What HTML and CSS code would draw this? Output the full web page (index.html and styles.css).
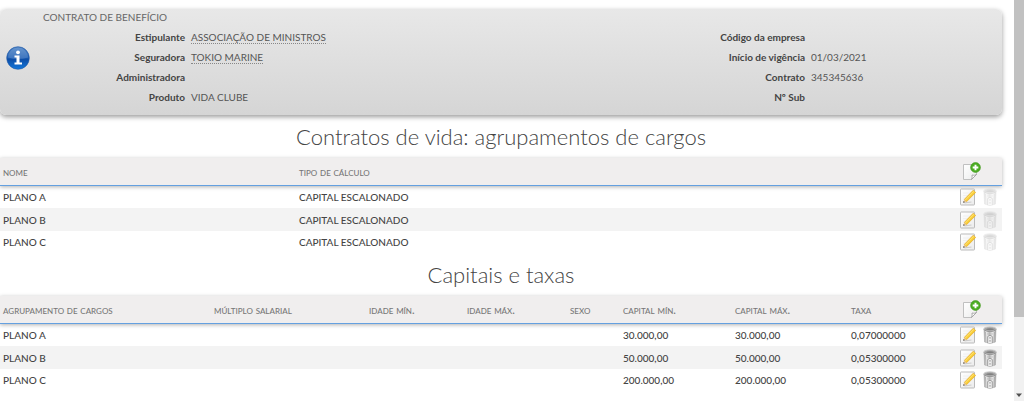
FILE: index.html
```
<!DOCTYPE html>
<html lang="pt-BR">
<head>
  <meta charset="UTF-8" />
  <meta name="viewport" content="width=device-width, initial-scale=1" />
  <title>Contrato de benefício</title>
  <link rel="stylesheet" href="styles.css">
</head>
<body>

  <svg class="defs" aria-hidden="true">
    <defs>
      <linearGradient id="azul" x1="0" y1="0" x2="0" y2="1">
        <stop offset="0" stop-color="#4d83c6" />
        <stop offset=".5" stop-color="#1f5fb4" />
        <stop offset=".55" stop-color="#0d4da6" />
        <stop offset="1" stop-color="#1278dc" />
      </linearGradient>
      <linearGradient id="papel" x1="0" y1="0" x2="1" y2="1">
        <stop offset="0" stop-color="#fff" />
        <stop offset="1" stop-color="#ececec" />
      </linearGradient>
      <linearGradient id="metal" x1="0" y1="0" x2="1" y2="0">
        <stop offset="0" stop-color="#999" />
        <stop offset=".2" stop-color="#f4f4f4" />
        <stop offset=".45" stop-color="#bbb" />
        <stop offset=".75" stop-color="#f2f2f2" />
        <stop offset="1" stop-color="#909090" />
      </linearGradient>
    </defs>
    <symbol id="novo" viewBox="0 0 20 20">
      <path d="M2.500 2.500h13v10l-5 5h-8z" fill="url(#papel)" stroke="#c0c0c0" />
      <path d="M10.500 17.500q1-2.500.5-4.500 2 .8 4.500-.5z" fill="#fff" stroke="#999" stroke-width=".8" />
      <circle cx="14.500" cy="5.500" r="4.900" fill="#4cad22" stroke="#3c9518" stroke-width=".6" />
      <path d="M14.500 2.700v5.600M11.700 5.500h5.600" stroke="#fff" stroke-width="1.900" />
    </symbol>
    <symbol id="editar" viewBox="0 0 16 18">
      <rect x=".5" y="1" width="14" height="16" rx=".6" fill="url(#papel)" stroke="#bbb" />
      <path d="M3 5h7M3 7.500h5M3 10h3" stroke="#f0f0f0" />
      <path d="M4.500 14.800l7-.8" stroke="#ccc" stroke-width="1.200" />
      <path d="M4.200 11.500L13.200 2.200l2.500 2.200L6.600 13.700z" fill="#f9cd35" stroke="#dfa528" stroke-width=".6" />
      <path d="M5.300 12L14 3.200" stroke="#ffe98a" stroke-width=".8" />
      <path d="M3.300 14.500l.9-3 2.400 2.200z" fill="#e8c795" />
      <path d="M3.200 14.700l.5-1.700 1.200 1.200z" fill="#333" />
    </symbol>
    <symbol id="excluir" viewBox="0 0 14 18">
      <path d="M1 3l.6 13q5.400 3 10.800 0L13 3z" fill="url(#metal)" stroke="#aaa" stroke-width=".6" />
      <path d="M2.700 6l.4 10M11.300 6l-.4 10" stroke="#999" stroke-width=".7" />
      <path d="M4.900 6.800v2M7 7v1.500M9.100 6.800v2" stroke="#aaa" stroke-width=".6" />
      <path d="M4.700 17v-6.500q2.300-2.500 4.600 0V17" fill="#eee" stroke="#8c8c8c" stroke-width=".8" />
      <path d="M6.300 11.300h1.400v1.200H6.300zM6.300 14.300h1.400v1.200H6.300z" fill="#999" />
      <ellipse cx="7" cy="3" rx="6.300" ry="2.300" fill="#a8a8a8" stroke="#d0d0d0" stroke-width=".9" />
      <path d="M2.500 3.300q4.500-2 9 0-4.500 2-9 0z" fill="#808080" />
      <path d="M.8 3.700q6.200 4 12.400 0" fill="none" stroke="#808080" stroke-width=".7" />
    </symbol>
  </svg>

  <main class="content">
    <section class="panel">
      <svg class="info" viewBox="0 0 24 24" aria-hidden="true">
        <circle cx="12" cy="12" r="11.300" fill="url(#azul)" stroke="#1c56a4" stroke-width=".6" />
        <path d="M2 11.500a10 10 0 0 1 20 0q-10 3-20 0z" fill="#fff" opacity=".15" />
        <circle cx="12" cy="6.300" r="1.900" fill="#fff" />
        <path d="M8.500 9.500h5v7H16v2H8.500v-2h2v-5h-2z" fill="#fff" />
      </svg>
      <div class="panel-body">
        <h2>CONTRATO DE BENEFÍCIO</h2>
        <dl class="fields">
          <dt>Estipulante</dt><dd><a href="#">ASSOCIAÇÃO DE MINISTROS</a></dd>
          <dt>Código da empresa</dt><dd></dd>
          <dt>Seguradora</dt><dd><a href="#">TOKIO MARINE</a></dd>
          <dt>Início de vigência</dt><dd>01/03/2021</dd>
          <dt>Administradora</dt><dd></dd>
          <dt>Contrato</dt><dd>345345636</dd>
          <dt>Produto</dt><dd>VIDA CLUBE</dd>
          <dt>Nº Sub</dt><dd></dd>
        </dl>
      </div>
    </section>

    <h1>Contratos de vida: agrupamentos de cargos</h1>
    <table>
      <colgroup>
        <col class="w-nome"><col><col class="w-acoes">
      </colgroup>
      <thead>
        <tr>
          <th>nome</th>
          <th>tipo de cálculo</th>
          <th><button class="icon add" aria-label="Novo agrupamento"><svg><use href="#novo" /></svg></button></th>
        </tr>
      </thead>
      <tbody>
        <tr>
          <td>PLANO A</td><td>CAPITAL ESCALONADO</td>
          <td><div class="actions">
            <button class="icon" aria-label="Editar"><svg><use href="#editar" /></svg></button>
            <button class="icon" aria-label="Excluir" disabled><svg><use href="#excluir" /></svg></button>
          </div></td>
        </tr>
        <tr>
          <td>PLANO B</td><td>CAPITAL ESCALONADO</td>
          <td><div class="actions">
            <button class="icon" aria-label="Editar"><svg><use href="#editar" /></svg></button>
            <button class="icon" aria-label="Excluir" disabled><svg><use href="#excluir" /></svg></button>
          </div></td>
        </tr>
        <tr>
          <td>PLANO C</td><td>CAPITAL ESCALONADO</td>
          <td><div class="actions">
            <button class="icon" aria-label="Editar"><svg><use href="#editar" /></svg></button>
            <button class="icon" aria-label="Excluir" disabled><svg><use href="#excluir" /></svg></button>
          </div></td>
        </tr>
      </tbody>
    </table>

    <h1>Capitais e taxas</h1>
    <table>
      <colgroup>
        <col class="w-agrup"><col class="w-multiplo"><col class="w-idade-min"><col class="w-idade-max"><col class="w-sexo">
        <col class="w-capital-min"><col class="w-capital-max"><col><col class="w-acoes">
      </colgroup>
      <thead>
        <tr>
          <th>agrupamento de cargos</th>
          <th>múltiplo salarial</th>
          <th>idade mín.</th>
          <th>idade máx.</th>
          <th>sexo</th>
          <th>capital mín.</th>
          <th>capital máx.</th>
          <th>taxa</th>
          <th><button class="icon add" aria-label="Nova taxa"><svg><use href="#novo" /></svg></button></th>
        </tr>
      </thead>
      <tbody>
        <tr>
          <td>PLANO A</td><td></td><td></td><td></td><td></td>
          <td>30.000,00</td><td>30.000,00</td><td>0,07000000</td>
          <td><div class="actions">
            <button class="icon" aria-label="Editar"><svg><use href="#editar" /></svg></button>
            <button class="icon" aria-label="Excluir"><svg><use href="#excluir" /></svg></button>
          </div></td>
        </tr>
        <tr>
          <td>PLANO B</td><td></td><td></td><td></td><td></td>
          <td>50.000,00</td><td>50.000,00</td><td>0,05300000</td>
          <td><div class="actions">
            <button class="icon" aria-label="Editar"><svg><use href="#editar" /></svg></button>
            <button class="icon" aria-label="Excluir"><svg><use href="#excluir" /></svg></button>
          </div></td>
        </tr>
        <tr>
          <td>PLANO C</td><td></td><td></td><td></td><td></td>
          <td>200.000,00</td><td>200.000,00</td><td>0,05300000</td>
          <td><div class="actions">
            <button class="icon" aria-label="Editar"><svg><use href="#editar" /></svg></button>
            <button class="icon" aria-label="Excluir"><svg><use href="#excluir" /></svg></button>
          </div></td>
        </tr>
      </tbody>
    </table>
  </main>

  <div class="scrollbar" aria-hidden="true">
    <div class="thumb"></div>
    <svg class="arrow" viewBox="0 0 10 12"><path d="M2 4.500h6L5 8z" fill="#505050" /></svg>
  </div>

</body>
</html>
```
FILE: styles.css
```
body {
  margin: 0;
  display: flex;
  height: 100vh;
  overflow: hidden;
  font-family: Lato, sans-serif;
  font-size: 10px;
  line-height: 20px;
  color: #444;
  background: #fff;
}

.defs {
  position: absolute;
  width: 0;
  height: 0;
}

.content {
  flex: 1;
  min-width: 0;
  padding: 9px 12px 0 0;
}

.panel {
  display: flex;
  align-items: center;
  gap: 13px;
  padding: 0 0 8px 6px;
  border-radius: 6px;
  background: linear-gradient(#e8e8e8, #d5d5d5);
  box-shadow: 0 2px 5px rgba(0, 0, 0, 0.4);
}

.info {
  width: 24px;
  height: 24px;
}

.panel-body {
  flex: 1;
}

.panel h2 {
  margin: 0;
  font-size: 10px;
  line-height: 16px;
  font-weight: 400;
  color: #666;
}

.fields {
  display: grid;
  grid-template-columns: 142px 1fr 142px 191px;
  column-gap: 6px;
  margin: 2px 0 0;
}

.fields dt {
  text-align: right;
  font-weight: 700;
}

.fields dd {
  margin: 0;
  min-height: 20px;
  color: #555;
}

.fields a {
  display: inline-block;
  line-height: 12px;
  color: #555;
  text-decoration: none;
  border-bottom: 1px dotted #888;
}

h1 {
  margin: 0;
  padding: 1px 0 0;
  line-height: 42px;
  font-size: 22px;
  font-weight: 300;
  text-align: center;
}

table {
  width: 100%;
  table-layout: fixed;
  border-collapse: separate;
  border-spacing: 0;
}

th,
td {
  padding: 0 3px;
  text-align: left;
}

th {
  height: 27px;
  background: #f0eeee;
  border-bottom: 1px solid #64a0e0;
  font-size: 11px;
  font-variant: small-caps;
  font-weight: 500;
  color: #777;
}

thead tr {
  box-shadow: 0 1px 4px rgba(0, 0, 0, 0.3);
}

td {
  height: 22px;
  font-weight: 500;
}

tbody tr:nth-child(even) td {
  height: 23px;
  background: #f3f3f3;
}

.w-nome { width: 296px; }
.w-agrup { width: 211px; }
.w-multiplo { width: 155px; }
.w-idade-min { width: 98px; }
.w-idade-max { width: 103px; }
.w-sexo { width: 53px; }
.w-capital-min { width: 112px; }
.w-capital-max { width: 116px; }
.w-acoes { width: 45px; }

.actions {
  display: flex;
  align-items: center;
  gap: 7px;
}

.icon {
  display: block;
  width: 16px;
  height: 18px;
  padding: 0;
  border: none;
  background: none;
  cursor: pointer;
}

.icon + .icon {
  width: 14px;
}

.icon svg {
  display: block;
  width: 100%;
  height: 100%;
}

.icon.add {
  width: 20px;
  height: 20px;
  margin-left: 1px;
}

.icon:disabled {
  opacity: 0.3;
  cursor: default;
}

.scrollbar {
  display: flex;
  flex-direction: column;
  justify-content: space-between;
  width: 10px;
  background: #f1f1f1;
}

.thumb {
  height: 79%;
  background: #c1c1c1;
}

.arrow {
  width: 10px;
  height: 12px;
}
```
